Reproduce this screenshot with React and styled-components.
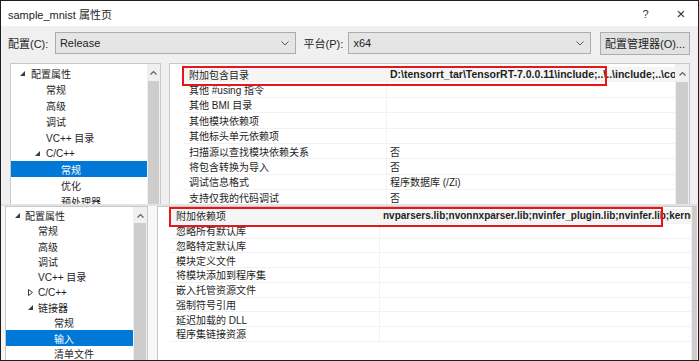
import React from 'react';
import styled, { createGlobalStyle } from 'styled-components';

const GlobalStyle = createGlobalStyle`
  html, body {
    margin: 0;
    padding: 0;
    background: #fff;
  }
  * {
    box-sizing: border-box;
  }
`;

const FONT = `"Liberation Sans", "Noto Sans CJK SC", sans-serif`;

const Frame = styled.div`
  width: 699px;
  height: 361px;
  border: 1px solid #1e1e1e;
  display: flex;
  flex-direction: column;
  overflow: hidden;
  font-family: ${FONT};
  font-size: 10px;
  color: #1e1e1e;
  background: #f0f0f0;
`;

const Dialog = styled.div`
  display: flex;
  flex-direction: column;
  height: ${({ h }) => h}px;
  flex-shrink: 0;
  overflow: hidden;
`;

const TitleBar = styled.div`
  height: 25px;
  background: #fff;
  display: flex;
  align-items: center;
  padding: 0 0 0 7px;
  font-size: 11px;
`;

const Title = styled.span`
  flex: 1;
`;

const TitleButton = styled.span`
  width: ${({ w }) => w}px;
  text-align: center;
  font-size: ${({ big }) => (big ? 15 : 11)}px;
  color: #333;
`;

const Toolbar = styled.div`
  height: 34px;
  display: flex;
  align-items: center;
  padding: 0 8px 0 7px;
`;

const Label = styled.span`
  width: ${({ w }) => w}px;
  font-size: 11px;
`;

const Combo = styled.div`
  width: ${({ w }) => w}px;
  height: 22px;
  border: 1px solid #acacac;
  background: #e5e5e5;
  display: flex;
  align-items: center;
  padding: 0 6px 0 4px;
  margin-right: ${({ mr }) => mr}px;
  font-size: 11px;
`;

const ComboText = styled.span`
  flex: 1;
`;

const Chevron = styled.svg`
  width: 8px;
  height: 5px;
`;

const Button = styled.div`
  width: 90px;
  height: 23px;
  border: 1px solid #adadad;
  background: #e1e1e1;
  display: flex;
  align-items: center;
  justify-content: center;
  font-size: 11px;
`;

const Body = styled.div`
  flex: 1;
  display: flex;
  gap: ${({ gap }) => gap}px;
  padding: ${({ pad }) => pad};
  background: ${({ bg }) => bg};
  min-height: 0;
`;

const TreeBox = styled.div`
  width: ${({ w }) => w}px;
  flex-shrink: 0;
  display: flex;
  border: 1px solid #c8c8c8;
  background: #fff;
  height: 300px;
`;

const TreeList = styled.div`
  flex: 1;
  padding-top: ${({ pt }) => pt}px;
`;

const TreeRow = styled.div`
  height: ${({ h }) => h}px;
  display: flex;
  align-items: center;
  padding-left: ${({ indent }) => indent}px;
  background: ${({ selected }) => (selected ? '#0078d7' : 'transparent')};
  color: ${({ selected }) => (selected ? '#fff' : '#1e1e1e')};
  white-space: nowrap;
`;

const Arrow = styled.span`
  width: ${({ w }) => w}px;
  display: flex;
  align-items: center;
`;

const Scrollbar = styled.div`
  width: ${({ w }) => w}px;
  flex-shrink: 0;
  background: #f0f0f0;
  display: flex;
  flex-direction: column;
  align-items: center;
`;

const ScrollUp = styled.div`
  height: ${({ h }) => h}px;
  display: flex;
  align-items: center;
  justify-content: center;
`;

const Thumb = styled.div`
  width: ${({ w }) => w}px;
  flex: 1;
  background: #cdcdcd;
`;

const GridBox = styled.div`
  position: relative;
  width: ${({ w }) => w}px;
  flex-shrink: 0;
  display: flex;
  border: 1px solid #c8c8c8;
  border-right: ${({ open }) => (open ? 'none' : '1px solid #c8c8c8')};
  background: #fff;
  height: 300px;
`;

const GridRows = styled.div`
  flex: 1;
  min-width: 0;
  padding-top: ${({ pt }) => pt}px;
  overflow: hidden;
`;

const GridRow = styled.div`
  height: ${({ h }) => h}px;
  display: flex;
  align-items: center;
  padding-left: ${({ gutter }) => gutter}px;
`;

const NameCell = styled.div`
  width: ${({ w }) => w}px;
  height: 100%;
  flex-shrink: 0;
  display: flex;
  align-items: center;
  padding-left: 6px;
  border-bottom: 1px solid #f2f2f2;
  border-right: 1px solid #f2f2f2;
  background: ${({ selected }) => (selected ? '#f5f5f5' : '#fff')};
  white-space: nowrap;
`;

const ValueCell = styled.div`
  flex: 1;
  height: 100%;
  display: flex;
  align-items: center;
  padding-left: 3px;
  border-bottom: 1px solid #f2f2f2;
  font-weight: ${({ bold }) => (bold ? 700 : 400)};
  font-size: ${({ bold, boldSize }) => (bold ? boldSize : 10)}px;
  background: ${({ selected }) => (selected ? '#f5f5f5' : '#fff')};
  white-space: nowrap;
  overflow: hidden;
`;

const RedBox = styled.div`
  position: absolute;
  left: ${({ x }) => x}px;
  top: ${({ y }) => y}px;
  width: ${({ w }) => w}px;
  height: ${({ h }) => h}px;
  border: 2px solid #e8161b;
  pointer-events: none;
`;

const Divider = styled.div`
  height: 2px;
  flex-shrink: 0;
  background: #e3e3e3;
`;

const ExpandedIcon = () => (
  <svg width="5" height="5" viewBox="0 0 5 5">
    <path d="M5 0 L5 5 L0 5 Z" fill="#3c3c3c" />
  </svg>
);

const CollapsedIcon = () => (
  <svg width="5" height="7" viewBox="0 0 5 7">
    <path d="M0.5 0.5 L4.5 3.5 L0.5 6.5 Z" fill="none" stroke="#3c3c3c" strokeWidth="1" />
  </svg>
);

const UpIcon = () => (
  <svg width="7" height="5" viewBox="0 0 7 5">
    <path d="M0.5 4.5 L3.5 1.5 L6.5 4.5" fill="none" stroke="#606060" strokeWidth="1.2" />
  </svg>
);

const topTree = [
  { text: '配置属性', level: 0, arrow: 'open' },
  { text: '常规', level: 1 },
  { text: '高级', level: 1 },
  { text: '调试', level: 1 },
  { text: 'VC++ 目录', level: 1 },
  { text: 'C/C++', level: 1, arrow: 'open' },
  { text: '常规', level: 2, selected: true },
  { text: '优化', level: 2 },
  { text: '预处理器', level: 2 },
];

const bottomTree = [
  { text: '配置属性', level: 0, arrow: 'open' },
  { text: '常规', level: 1 },
  { text: '高级', level: 1 },
  { text: '调试', level: 1 },
  { text: 'VC++ 目录', level: 1 },
  { text: 'C/C++', level: 1, arrow: 'closed' },
  { text: '链接器', level: 1, arrow: 'open' },
  { text: '常规', level: 2 },
  { text: '输入', level: 2, selected: true },
  { text: '清单文件', level: 2 },
];

const topRows = [
  ['附加包含目录', 'D:\\tensorrt_tar\\TensorRT-7.0.0.11\\include;..\\..\\include;..\\common;%(AdditionalIncludeDirectories)', true],
  ['其他 #using 指令', ''],
  ['其他 BMI 目录', ''],
  ['其他模块依赖项', ''],
  ['其他标头单元依赖项', ''],
  ['扫描源以查找模块依赖关系', '否'],
  ['将包含转换为导入', '否'],
  ['调试信息格式', '程序数据库 (/Zi)'],
  ['支持仅我的代码调试', '否'],
  ['公共语言运行时支持', ''],
];

const bottomRows = [
  ['附加依赖项', 'nvparsers.lib;nvonnxparser.lib;nvinfer_plugin.lib;nvinfer.lib;kernel32.lib;user32.lib;gdi32.lib', true],
  ['忽略所有默认库', ''],
  ['忽略特定默认库', ''],
  ['模块定义文件', ''],
  ['将模块添加到程序集', ''],
  ['嵌入托管资源文件', ''],
  ['强制符号引用', ''],
  ['延迟加载的 DLL', ''],
  ['程序集链接资源', ''],
];

const Tree = ({ items, width, rowH, pt, indents, arrowW, sbW, thumbW, upH }) => (
  <TreeBox w={width}>
    <TreeList pt={pt}>
      {items.map((it, i) => (
        <TreeRow key={i} h={rowH} indent={indents[it.level]} selected={it.selected}>
          <Arrow w={arrowW}>
            {it.arrow === 'open' && <ExpandedIcon />}
            {it.arrow === 'closed' && <CollapsedIcon />}
          </Arrow>
          {it.text}
        </TreeRow>
      ))}
    </TreeList>
    <Scrollbar w={sbW}>
      <ScrollUp h={upH}><UpIcon /></ScrollUp>
      <Thumb w={thumbW} />
    </Scrollbar>
  </TreeBox>
);

const Grid = ({ rows, width, rowH, pt, gutter, nameW, sbW, open, box, boldSize }) => (
  <GridBox w={width} open={open}>
    <GridRows pt={pt}>
      {rows.map(([name, value, bold], i) => (
        <GridRow key={i} h={rowH} gutter={gutter}>
          <NameCell w={nameW} selected={i === 0}>{name}</NameCell>
          <ValueCell bold={bold} boldSize={boldSize} selected={i === 0}>{value}</ValueCell>
        </GridRow>
      ))}
    </GridRows>
    <Scrollbar w={sbW}>
      {!open && <ScrollUp h={18}><UpIcon /></ScrollUp>}
      <Thumb w={open ? sbW - 1 : sbW - 2} />
    </Scrollbar>
    <RedBox {...box} />
  </GridBox>
);

const App = () => (
  <>
    <GlobalStyle />
    <Frame>
      <Dialog h={203}>
        <TitleBar>
          <Title>sample_mnist 属性页</Title>
          <TitleButton w={37}>?</TitleButton>
          <TitleButton w={34} big>×</TitleButton>
        </TitleBar>
        <Toolbar>
          <Label w={47}>配置(C):</Label>
          <Combo w={241} mr={8}>
            <ComboText>Release</ComboText>
            <Chevron viewBox="0 0 8 5"><path d="M0.5 0.5 L4 4 L7.5 0.5" fill="none" stroke="#555" /></Chevron>
          </Combo>
          <Label w={45}>平台(P):</Label>
          <Combo w={243} mr={9}>
            <ComboText>x64</ComboText>
            <Chevron viewBox="0 0 8 5"><path d="M0.5 0.5 L4 4 L7.5 0.5" fill="none" stroke="#555" /></Chevron>
          </Combo>
          <Button>配置管理器(O)...</Button>
        </Toolbar>
        <Body gap={8} pad="3px 0 0 9px" bg="#f0f0f0">
          <Tree
            items={topTree}
            width={151}
            rowH={15.9}
            pt={2}
            indents={[9, 24, 39]}
            arrowW={11}
            sbW={13}
            thumbW={11}
            upH={17}
          />
          <Grid
            rows={topRows}
            width={521}
            rowH={15.4}
            pt={3}
            gutter={13}
            nameW={204}
            sbW={14}
            boldSize={10.5}
            box={{ x: 12, y: 2, w: 425, h: 20 }}
          />
        </Body>
      </Dialog>
      <Divider />
      <Dialog h={160}>
        <Body gap={9} pad="0 0 0 4px" bg="#f7f7f7">
          <Tree
            items={bottomTree}
            width={143}
            rowH={15.3}
            pt={1}
            indents={[9, 22, 38]}
            arrowW={10}
            sbW={14}
            thumbW={12}
            upH={16}
          />
          <Grid
            rows={bottomRows}
            width={540}
            rowH={14.75}
            pt={2}
            gutter={12}
            nameW={210}
            sbW={6}
            open
            boldSize={10}
            box={{ x: 11, y: 0, w: 494, h: 20 }}
          />
        </Body>
      </Dialog>
    </Frame>
  </>
);

export default App;
